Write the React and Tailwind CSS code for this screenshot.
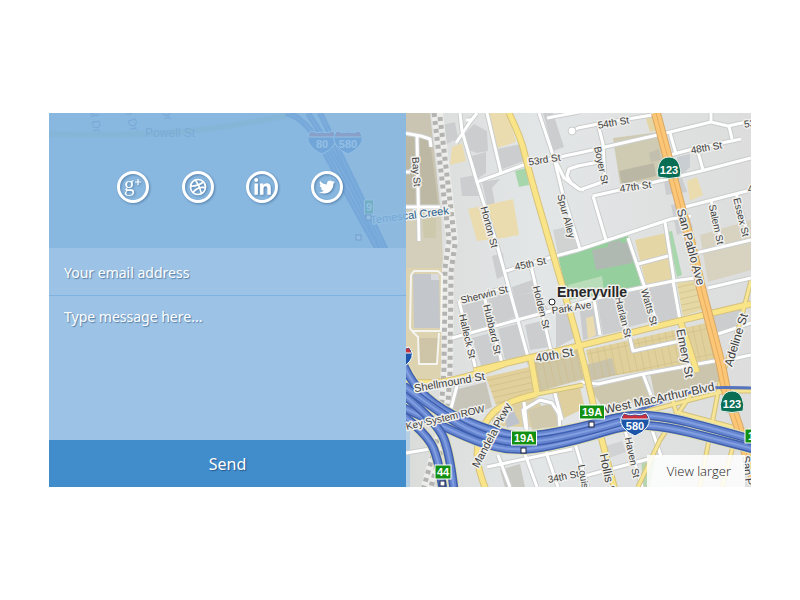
import React from "react";
import { FaLinkedinIn, FaTwitter } from "react-icons/fa";
import { Dribbble } from "lucide-react";

const blocks = [
  ["#b4cfe4", "49,113 350,113 410,250 410,487 49,487"],
  ["#d9dcdc", "320,113 406,113 406,250 372,250"],
  ["#c9c5b2", "406,113 430,113 440,206 440,268 406,268"],
  ["#bdb8a4", "406,136 430,140 438,204 406,204"],
  ["#d3cfba", "406,210 441,210 443,268 406,268"],
  ["#cdc9ad", "422,212 436,212 436,238 424,238"],
  ["#ddd3b0", "406,268 445,268 445,386 406,380"],
  ["#c3c6cb", "413,274 439,274 440,328 414,328"],
  ["#d9dbde", "431,274 439,274 439,280 431,280"],
  ["#cec5a8", "417,338 438,338 438,364 419,364"],
  ["#cbcdcf", "438,126 455,122 458,138 443,146"],
  ["#cbcdcf", "465,134 474,124 487,131 488,151 477,153 468,150"],
  ["#cbcdcf", "468,157 486,152 486,173 477,179"],
  ["#cbcdcf", "493,150 521,144 524,161 500,170"],
  ["#cbcdcf", "460,178 475,175 481,196 462,196"],
  ["#cbcdcf", "482,182 500,179 492,188 496,210 489,213"],
  ["#cbcdcf", "543,113 553,113 564,147 553,151"],
  ["#eadcae", "487,113 508,113 516,142 497,148"],
  ["#eadcae", "452,147 462,143 466,161 450,165"],
  ["#eadcae", "468,209 482,206 513,199 519,235 503,238 477,241"],
  ["#a7d6ad", "515,171 526,168 529,185 519,187"],
  ["#d1d3d3", "553,230 575,225 581,249 558,254"],
  ["#cfcbb3", "613,138 659,132 665,157 662,180 620,184"],
  ["#bbb7a5", "619,171 654,163 656,176 622,184"],
  ["#c3bfae", "649,153 659,149 661,160 651,162"],
  ["#e3d7a8", "645,116 655,114 658,130 650,132"],
  ["#c9ced2", "677,157 690,154 690,167 680,177"],
  ["#cbcdcf", "664,181 682,178 687,192 666,195"],
  ["#eadcae", "687,181 697,177 703,195 690,201"],
  ["#cbcdcf", "671,205 684,202 693,228 677,235"],
  ["#95cf9d", "558,256 628,236 642,288 568,300"],
  ["#b8ddb8", "568,285 602,276 604,291 571,297"],
  ["#b0b8b2", "592,250 608,247 608,243 620,240 621,243 630,242 633,263 596,270"],
  ["#e5d6a5", "635,240 666,233 675,280 646,284"],
  ["#a8d7ad", "667,232 672,231 682,275 677,277"],
  ["#cbcdcf", "492,256 503,253 505,275 497,279"],
  ["#cbcdcf", "462,304 483,298 493,330 469,335"],
  ["#cbcdcf", "488,298 508,292 515,317 495,325"],
  ["#cbcdcf", "512,287 532,280 537,291 514,297"],
  ["#cbcdcf", "512,297 540,291 547,309 520,318"],
  ["#cbcdcf", "472,338 494,332 502,360 482,368"],
  ["#cbcdcf", "498,329 517,324 527,356 505,360"],
  ["#cbcdcf", "525,325 545,320 550,347 530,350"],
  ["#cbcdcf", "556,310 568,306 576,337 556,348"],
  ["#c9cbcd", "579,302 594,298 601,335 583,340"],
  ["#eadcae", "586,318 593,316 596,335 588,339"],
  ["#cbcdcf", "597,300 615,295 625,330 603,335"],
  ["#cbcdcf", "619,295 640,290 652,321 629,327"],
  ["#cbcdcf", "646,288 671,283 677,318 660,322"],
  ["#e5d8a4", "677,283 695,279 702,310 683,316"],
  ["#d8d3c0", "700,235 751,220 751,270 708,282"],
  ["#cbcdcf", "710,310 742,303 735,330 717,335"],
  ["#cfc6a6", "534,361 577,350 584,379 540,391"],
  ["#e0d09c", "586,350 706,323 720,359 592,379"],
  ["#c9c3ab", "586,365 612,358 616,375 591,381"],
  ["#c7c5ba", "455,390 486,382 492,407 470,416 450,412"],
  ["#e1d09c", "486,377 529,367 534,391 496,405"],
  ["#ddd0a4", "490,410 534,397 560,428 493,426"],
  ["#bdc3cd", "504,415 513,410 520,423 507,428"],
  ["#d1c9ad", "528,410 552,403 560,425 532,430"],
  ["#dfcf9f", "555,393 580,387 585,408 562,419"],
  ["#cdc7ae", "590,388 645,375 650,399 603,408"],
  ["#ccc5ad", "650,373 720,361 724,380 655,398"],
  ["#b8d5af", "641,458 656,455 650,487 643,487"],
  ["#c9c9c4", "500,470 520,464 525,487 505,487"],
  ["#d0d2d4", "606,446 622,441 626,452 609,458"],
];

const whiteRoads = [
  "404,133 421,136 430,139 431,147",
  "417,136 419,241",
  "404,207 440,207",
  "404,172 410,172",
  "460,113 462,131 477,182 497,245 530,364",
  "477,113 470,122 456,143",
  "466,120 472,120",
  "487,113 501,173",
  "477,182 526,164 579,153 666,133 711,122 728,126 751,121",
  "539,113 554,158 562,191 580,249",
  "547,118 579,112",
  "572,131 578,128 598,124 658,114",
  "579,189 571,183 567,176 569,169 578,166 604,161",
  "554,158 564,178 579,189 584,190",
  "598,124 603,144 605,181 580,190",
  "711,113 711,122",
  "729,126 732,139",
  "666,156 693,149 741,139",
  "593,196 651,183 701,171 751,158",
  "593,196 606,240",
  "670,133 676,154",
  "698,152 703,170",
  "681,208 712,200 751,190",
  "506,271 541,260 578,250 671,219 691,216",
  "711,200 722,244",
  "736,193 748,235",
  "696,253 751,240",
  "665,222 674,280",
  "459,301 507,287",
  "459,301 476,370",
  "484,296 502,363",
  "531,266 551,351",
  "452,338 517,320 554,310 620,292 673,281 695,278",
  "594,299 600,335",
  "628,238 645,288 658,326",
  "638,264 668,256",
  "617,295 627,335",
  "673,281 680,320",
  "708,288 751,278",
  "629,334 633,351 680,341",
  "715,335 751,323",
  "719,362 751,355",
  "450,412 458,382",
  "526,429 523,410 540,400 552,403 559,414 560,430",
  "524,402 527,430",
  "554,390 562,420",
  "581,382 598,384 643,374 720,360",
  "643,374 651,395",
  "498,455 510,487",
  "525,454 537,487",
  "546,452 558,487",
  "487,467 572,449",
  "574,440 588,487",
  "625,430 642,487",
  "577,478 660,456",
  "406,453 430,449",
  "652,430 661,456",
];

const lanes = [
  "411,275 414,271 438,271 442,275 441,331 412,331 410,328 411,275",
  "412,331 418,337 419,364 437,364 439,333",
];

const yellowRoads = [
  "509,113 521,138 527,164 549,241 580,346 595,412 603,445 615,490",
  "474,371 486,368 537,356 579,346 678,321 751,304",
  "404,380 430,386 484,372 504,364",
  "531,359 537,394",
  "537,394 504,402 484,422 476,449 479,472 486,490",
  "680,320 697,372",
];

const thinYellowRoads = [
  "751,281 738,330 720,382 700,487",
  "672,398 676,412 751,432",
  "692,393 660,440 638,487",
  "640,413 725,391 751,391",
  "735,439 722,487",
  "583,385 537,394",
];

const orangeRoad = "656,113 681,208 690,240 701,288 721,365 726,390 738,425 754,480";

const freeways = [
  "404,366 412,384 441,410 487,430 524,438 579,428 628,414 668,417 711,428 754,440",
  "404,408 444,427 487,446 524,451 579,440 628,424 668,427 711,438 754,449",
  "404,395 438,423 450,455 454,490",
  "404,416 424,432 438,455 443,490",
  "404,386 446,418 487,438 524,444 579,434 620,422",
];

const underlayFreeways = [
  "286,113 306,117 345,190 378,250",
  "308,113 345,170 383,250",
  "320,113 358,190 400,280",
];

const streetLabels = [
  ["54th St", 614, 126, -10, 10],
  ["53rd St", 545, 163, -9, 10],
  ["48th St", 707, 151, -10, 10],
  ["53", 750, 127, -8, 10],
  ["47th St", 636, 190, -8, 10],
  ["4", 751, 192, -8, 10],
  ["Boyer St", 598, 166, 78, 10],
  ["Bay St", 413, 172, 86, 10],
  ["Horton St", 486, 228, 75, 10],
  ["Spur Alley", 563, 217, 75, 10],
  ["Salem St", 713, 225, 78, 10],
  ["Essex St", 738, 218, 76, 10],
  ["San Pablo Ave", 687, 248, 75, 12],
  ["45th St", 531, 267, -12, 10],
  ["Sherwin St", 485, 298, -14, 10],
  ["Halleck St", 464, 337, 77, 10],
  ["Hubbard St", 489, 330, 77, 10],
  ["Holden St", 538, 308, 76, 10],
  ["Park Ave", 572, 311, -9, 10],
  ["Harlan St", 620, 318, 76, 10],
  ["Watts St", 646, 308, 74, 10],
  ["40th St", 555, 359, -10, 12],
  ["Emery St", 681, 354, 79, 12],
  ["Adeline St", 740, 341, -73, 12],
  ["Shellmound St", 450, 386, -10, 11],
  ["Key System ROW", 446, 421, -13, 10],
  ["Mandela Pkwy", 495, 437, -62, 11],
  ["West MacArthur Blvd", 660, 402, -12, 12],
  ["34th St", 564, 480, -11, 10],
  ["Louis", 580, 477, 80, 10],
  ["Hollis St", 604, 476, 78, 12],
  ["Haven St", 629, 458, 78, 10],
  ["San P", 744, 471, 82, 11],
];

const exits = [
  ["19A", 592, 412, 25],
  ["19A", 524, 438, 25],
  ["44", 443, 472, 16],
  ["19", 754, 436, 18],
  ["9", 369, 207, 9],
];

// Rounds a list of points by running quadratic curves between the midpoints.
function curve(points) {
  const p = points.split(" ").map((pair) => pair.split(",").map(Number));
  let d = `M${p[0].join(" ")}`;
  for (let i = 1; i < p.length - 1; i++) {
    const last = i === p.length - 2;
    const x = last ? p[i + 1][0] : (p[i][0] + p[i + 1][0]) / 2;
    const y = last ? p[i + 1][1] : (p[i][1] + p[i + 1][1]) / 2;
    d += ` Q${p[i].join(" ")} ${x} ${y}`;
  }
  if (p.length === 2) d += ` L${p[1].join(" ")}`;
  return d;
}

function Line({ points, color, width, dash }) {
  return (
    <polyline
      points={points}
      fill="none"
      stroke={color}
      strokeWidth={width}
      strokeDasharray={dash}
      strokeLinejoin="round"
    />
  );
}

function Curve({ points, color, width }) {
  return <path d={curve(points)} fill="none" stroke={color} strokeWidth={width} />;
}

function Shield({ x, y, label }) {
  return (
    <g transform={`translate(${x} ${y})`}>
      <path
        d="M-11-11 Q-5-8 0-10 Q5-8 11-11 Q17-4 12 3 Q8 9 0 12 Q-8 9-12 3 Q-17-4-11-11Z"
        fill="#1d56a8"
        stroke="#fff"
        strokeWidth="1"
      />
      <path d="M-11-10 Q-5-7 0-9 Q5-7 11-10 L13-5 H-13Z" fill="#c5303c" />
      <path d="M-13-5H13" stroke="#fff" />
      <text y="6" textAnchor="middle" fontSize="11" fontWeight="700" fill="#fff">
        {label}
      </text>
    </g>
  );
}

function StateRoute({ x, y }) {
  return (
    <g transform={`translate(${x} ${y})`}>
      <path
        d="M0-11 Q7-11 10-4 Q13 3 11 9 Q0 12-11 9 Q-13 3-10-4 Q-7-11 0-11Z"
        fill="#0a6e55"
        stroke="#e9f3ee"
        strokeWidth="1"
      />
      <text y="6" textAnchor="middle" fontSize="11" fontWeight="700" fill="#fff">
        123
      </text>
    </g>
  );
}

function CityMap() {
  const rail = "437,113 445,180 452,240 448,268 447,368 443,430 426,490";
  return (
    <svg
      className="absolute inset-0 h-full w-full font-['Liberation_Sans',Arial,sans-serif]"
      viewBox="49 113 702 374"
      preserveAspectRatio="xMidYMid slice"
      role="img"
      aria-label="Map of Emeryville"
    >
      <defs>
        <linearGradient id="land" x1="0" y1="0" x2="1" y2="0">
          <stop offset="0.5" stopColor="#dadcda" />
          <stop offset="0.7" stopColor="#e3e6e7" />
          <stop offset="1" stopColor="#dcdddc" />
        </linearGradient>
        <pattern id="lots" width="7" height="26" patternUnits="userSpaceOnUse" patternTransform="rotate(-12)">
          <path d="M0 0V26M0 0H7" stroke="#cbb980" strokeWidth="1" fill="none" />
        </pattern>
        <pattern id="strips" width="40" height="6" patternUnits="userSpaceOnUse" patternTransform="rotate(-13)">
          <path d="M0 0H40" stroke="#c8b67f" strokeWidth="1" />
        </pattern>
      </defs>
      <rect x="49" y="113" width="702" height="374" fill="url(#land)" />
      {blocks.map(([fill, points]) => (
        <polygon key={points} points={points} fill={fill} />
      ))}
      <polygon points="586,350 706,323 720,359 592,379" fill="url(#lots)" />
      <polygon points="534,361 577,350 584,379 540,391" fill="url(#lots)" />
      <polygon points="486,377 529,367 534,391 496,405" fill="url(#strips)" />
      <polygon points="677,283 695,279 702,310 683,316" fill="url(#strips)" />

      <Curve points="49,134 150,136 240,125 300,113" color="#a5c6a8" width="6" />
      {underlayFreeways.map((p) => (
        <Curve key={p} points={p} color="#3f67b4" width="6" />
      ))}
      {underlayFreeways.map((p) => (
        <Curve key={p} points={p} color="#7795cf" width="1" />
      ))}
      <g fontSize="12" fill="#4d6f96">
        <text x="170" y="137" textAnchor="middle">Powell St</text>
        <text transform="translate(91 119) rotate(80)" textAnchor="middle">ral Dr</text>
        <text transform="translate(127 118) rotate(75)" textAnchor="middle">ve Dr</text>
        <text transform="translate(163 115) rotate(75)" textAnchor="middle">Dr</text>
      </g>

      <Line points={rail} color="#ededeb" width="12" />
      <g transform="translate(-3 0)">
        <Line points={rail} color="#b3b3b2" width="5" dash="4 4" />
      </g>
      <g transform="translate(3 4)">
        <Line points={rail} color="#b3b3b2" width="5" dash="4 4" />
      </g>

      {whiteRoads.map((p) => (
        <Line key={p} points={p} color="#cbcdcd" width="5" />
      ))}
      {lanes.map((p) => (
        <Line key={p} points={p} color="#f4f4f0" width="2" />
      ))}
      {whiteRoads.map((p) => (
        <Line key={p} points={p} color="#fff" width="3" />
      ))}
      <circle cx="572" cy="131" r="4" fill="#fff" stroke="#cbcdcd" />
      {thinYellowRoads.map((p) => (
        <Line key={p} points={p} color="#d2c07c" width="5" />
      ))}
      {yellowRoads.map((p) => (
        <Curve key={p} points={p} color="#d6c27a" width="7" />
      ))}
      {thinYellowRoads.map((p) => (
        <Line key={p} points={p} color="#f6e594" width="3" />
      ))}
      {yellowRoads.map((p) => (
        <Curve key={p} points={p} color="#f9e588" width="5" />
      ))}
      <Line points={orangeRoad} color="#d9a866" width="10" />
      <Line points={orangeRoad} color="#fbc676" width="8" />
      <Line points={orangeRoad} color="#e8ad5e" width="1" />
      <Curve points="628,414 660,402 700,389 720,387 751,388" color="#5674bd" width="3" />
      {freeways.map((p) => (
        <Curve key={p} points={p} color="#dfdfb4" width="11" />
      ))}
      {freeways.map((p) => (
        <g key={p}>
          <Curve points={p} color="#3f5fae" width="9" />
          <Curve points={p} color="#6585d0" width="6" />
          <Curve points={p} color="#819ee0" width="2" />
        </g>
      ))}

      <g fill="#404040" textAnchor="middle" stroke="#efefec" strokeWidth="3" strokeLinejoin="round" paintOrder="stroke">
        {streetLabels.map(([text, x, y, angle, size]) => (
          <text key={text + x} transform={`translate(${x} ${y}) rotate(${angle})`} fontSize={size}>
            {text}
          </text>
        ))}
        <text x="592" y="297" fontSize="14" fontWeight="700" fill="#262626">
          Emeryville
        </text>
        <text transform="translate(410 219) rotate(-7)" fontSize="11" fill="#2c5f8d">Temescal Creek</text>
      </g>
      <circle cx="552" cy="302" r="3" fill="#fff" stroke="#222" strokeWidth="1" />

      {exits.map(([text, x, y, w]) => (
        <g key={text + x}>
          <rect x={x - w / 2} y={y - 7} width={w} height="14" fill="#129012" stroke="#fff" />
          <text x={x} y={y + 4} textAnchor="middle" fontSize="11" fontWeight="700" fill="#fff">
            {text}
          </text>
        </g>
      ))}
      {[[592, 425], [524, 451], [443, 484], [369, 218], [359, 238]].map(([x, y]) => (
        <rect key={x} x={x - 3} y={y - 3} width="5" height="5" fill="#fff" stroke="#1a2340" strokeWidth="1" />
      ))}
      <StateRoute x={669} y={168} />
      <StateRoute x={732} y={402} />
      <Shield x={635} y={424} label="580" />
      <Shield x={398} y={358} label="80" />
      <Shield x={322} y={142} label="80" />
      <Shield x={348} y={142} label="580" />
    </svg>
  );
}

function SocialLink({ label, children }) {
  return (
    <a
      href="#"
      aria-label={label}
      className="flex size-8 items-center justify-center rounded-full border-3 border-white text-white drop-shadow-[1px_1px_1px_rgba(40,80,120,0.5)]"
    >
      {children}
    </a>
  );
}

export default function App() {
  return (
    <main className="flex min-h-screen items-center justify-center bg-white font-['Noto_Sans','Open_Sans',sans-serif]">
      <section className="relative flex w-full max-w-[702px] overflow-hidden">
        <CityMap />
        <form className="relative flex w-[357px] flex-col text-white" onSubmit={(e) => e.preventDefault()}>
          <nav aria-label="Social profiles" className="flex justify-between bg-[#80b3e0]/86 pt-[58px] pr-[63px] pb-[45px] pl-17">
            <SocialLink label="Google Plus">
              <svg viewBox="0 0 20 20" className="size-5" fill="currentColor" aria-hidden="true">
                <text x="1" y="14" fontSize="21" className="font-['Liberation_Serif',serif]">g</text>
                <path d="M12 5H18M15 2V8" stroke="currentColor" strokeWidth="1.2" />
              </svg>
            </SocialLink>
            <SocialLink label="Dribbble">
              <Dribbble className="size-[18px]" strokeWidth={2.2} />
            </SocialLink>
            <SocialLink label="LinkedIn">
              <FaLinkedinIn className="size-[19px]" />
            </SocialLink>
            <SocialLink label="Twitter">
              <FaTwitter className="size-4" />
            </SocialLink>
          </nav>
          <input
            type="email"
            aria-label="Your email address"
            placeholder="Your email address"
            className="h-12 border-b border-[#7fb2df] bg-[#9cc3e6] px-[15px] pt-0.5 text-sm outline-none [text-shadow:1px_1px_1px_rgba(40,80,120,0.6)] placeholder:text-white"
          />
          <textarea
            aria-label="Message"
            placeholder="Type message here..."
            className="h-36 resize-none bg-[#9cc3e6] px-[15px] py-[11px] text-sm outline-none [text-shadow:1px_1px_1px_rgba(40,80,120,0.6)] placeholder:text-white"
          />
          <button type="submit" className="h-[47px] bg-[#418ccb] text-base [text-shadow:1px_1px_1px_rgba(20,50,90,0.6)]">
            Send
          </button>
        </form>
        <div className="relative flex flex-1 items-end justify-end">
          <a href="#" className="mr-1.5 bg-white/85 py-1.5 pr-3.5 pl-5 font-['Open_Sans',sans-serif] text-[13px] leading-5 font-light text-[#222]">
            View larger
          </a>
        </div>
      </section>
    </main>
  );
}
